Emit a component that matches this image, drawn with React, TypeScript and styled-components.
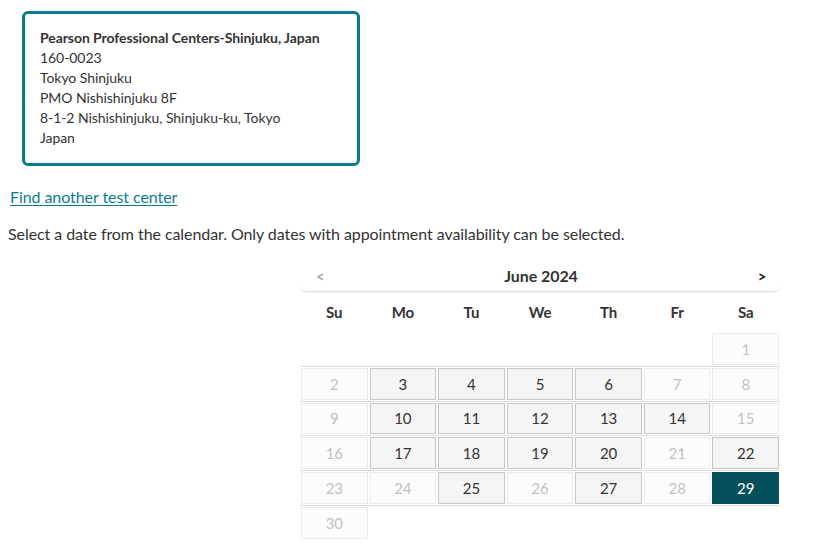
import styled, { createGlobalStyle } from "styled-components";

const GlobalStyle = createGlobalStyle`
  body {
    margin: 8px;
    font-family: Lato, "Open Sans", sans-serif;
    letter-spacing: -0.07px;
    color: #333;
    background: #fff;
  }
`;

const AddressCard = styled.div`
  width: 302px;
  margin: 3px 0 0 14px;
  padding: 14px 15px 15px 15px;
  border: 3px solid #0a7b8f;
  border-radius: 6px;
  font-size: 14px;
  line-height: 20px;
`;

const CenterName = styled.div`
  font-weight: 700;
`;

const FindLink = styled.a`
  display: inline-block;
  margin: 21px 0 0 2px;
  font-size: 16px;
  line-height: 20px;
  color: #0b7d91;
  text-decoration: underline;
  text-underline-offset: 2px;
  cursor: pointer;
`;

const Instructions = styled.p`
  margin: 17px 0 0 0;
  font-size: 16px;
  line-height: 20px;
`;

const Calendar = styled.div`
  width: 480px;
  margin: 16px 0 0 292px;
`;

const Header = styled.div`
  display: flex;
  align-items: center;
  justify-content: space-between;
  height: 31px;
  padding: 0 12px 0 14px;
  border-bottom: 1px solid #dcdcdc;
  border-radius: 0 0 6px 6px;
  box-shadow: 0 1px 1px rgba(0, 0, 0, 0.04);
`;

const NavArrow = styled.span<{ $muted?: boolean }>`
  width: 12px;
  font-size: 15px;
  font-weight: 700;
  color: ${(p) => (p.$muted ? "#a8a8a8" : "#222")};
  text-align: center;
`;

const MonthTitle = styled.div`
  font-size: 16px;
  font-weight: 700;
  color: #333;
`;

const WeekdayRow = styled.div`
  display: grid;
  grid-template-columns: repeat(7, 1fr);
  height: 40px;
  align-items: center;
`;

const Weekday = styled.div`
  text-align: center;
  font-size: 15px;
  font-weight: 700;
  color: #333;
`;

const Week = styled.div<{ $first?: boolean }>`
  display: grid;
  grid-template-columns: repeat(7, 1fr);
  border-top: ${(p) => (p.$first ? "none" : "1px solid #dedede")};
  padding: 1px 0;
`;

type DayState = "open" | "closed" | "selected" | "empty";

const DayCell = styled.div<{ $state: DayState }>`
  margin: 0 1px;
  height: 31.8px;
  box-sizing: border-box;
  display: flex;
  align-items: center;
  justify-content: center;
  font-size: 15px;
  border: 1px solid
    ${(p) =>
      p.$state === "open"
        ? "#c6c6c6"
        : p.$state === "selected"
        ? "#034f5a"
        : p.$state === "closed"
        ? "#ebebeb"
        : "transparent"};
  background: ${(p) =>
    p.$state === "open"
      ? "#f5f5f5"
      : p.$state === "selected"
      ? "#034f5a"
      : p.$state === "closed"
      ? "#fcfcfc"
      : "transparent"};
  color: ${(p) =>
    p.$state === "open" ? "#333" : p.$state === "selected" ? "#fff" : "#c2c2c2"};
  cursor: ${(p) => (p.$state === "open" ? "pointer" : "default")};
`;

const openDays = [3, 4, 5, 6, 10, 11, 12, 13, 14, 17, 18, 19, 20, 22, 25, 27];
const selectedDay = 29;
const weekdays = ["Su", "Mo", "Tu", "We", "Th", "Fr", "Sa"];

function buildWeeks(firstWeekday: number, daysInMonth: number) {
  const cells: (number | null)[] = [];
  for (let i = 0; i < firstWeekday; i++) cells.push(null);
  for (let d = 1; d <= daysInMonth; d++) cells.push(d);
  while (cells.length % 7 !== 0) cells.push(null);
  const weeks: (number | null)[][] = [];
  for (let i = 0; i < cells.length; i += 7) weeks.push(cells.slice(i, i + 7));
  return weeks;
}

function dayState(day: number | null): DayState {
  if (day === null) return "empty";
  if (day === selectedDay) return "selected";
  return openDays.includes(day) ? "open" : "closed";
}

export default function App() {
  const weeks = buildWeeks(6, 30);

  return (
    <>
      <GlobalStyle />
      <AddressCard>
        <CenterName>Pearson Professional Centers-Shinjuku, Japan</CenterName>
        <div>160-0023</div>
        <div>Tokyo Shinjuku</div>
        <div>PMO Nishishinjuku 8F</div>
        <div>8-1-2 Nishishinjuku, Shinjuku-ku, Tokyo</div>
        <div>Japan</div>
      </AddressCard>

      <FindLink>Find another test center</FindLink>

      <Instructions>
        Select a date from the calendar. Only dates with appointment availability can be selected.
      </Instructions>

      <Calendar>
        <Header>
          <NavArrow $muted>&lt;</NavArrow>
          <MonthTitle>June 2024</MonthTitle>
          <NavArrow>&gt;</NavArrow>
        </Header>
        <WeekdayRow>
          {weekdays.map((w) => (
            <Weekday key={w}>{w}</Weekday>
          ))}
        </WeekdayRow>
        {weeks.map((week, i) => (
          <Week key={i} $first={i === 0}>
            {week.map((day, j) => (
              <DayCell key={j} $state={dayState(day)}>
                {day ?? ""}
              </DayCell>
            ))}
          </Week>
        ))}
      </Calendar>
    </>
  );
}
